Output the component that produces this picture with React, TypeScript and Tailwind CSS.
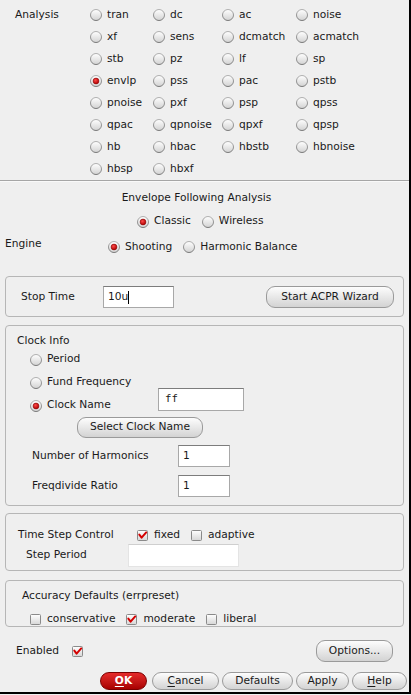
import React from "react";

const FONT = { fontFamily: '"DejaVu Sans", "Liberation Sans", sans-serif' };

function Radio({ checked }: { checked?: boolean }) {
  return (
    <svg width="12" height="12" viewBox="0 0 12 12" className="shrink-0">
      <defs>
        <linearGradient id="rgFill" x1="0" y1="0" x2="0" y2="1">
          <stop offset="0" stopColor="#ffffff" />
          <stop offset="1" stopColor="#d2d2d2" />
        </linearGradient>
        <linearGradient id="rgStroke" x1="0" y1="0" x2="0" y2="1">
          <stop offset="0" stopColor="#b0b0b0" />
          <stop offset="1" stopColor="#7a7a7a" />
        </linearGradient>
        <radialGradient id="rgDot" cx="0.4" cy="0.35" r="0.65">
          <stop offset="0" stopColor="#ff4a4a" />
          <stop offset="1" stopColor="#b00000" />
        </radialGradient>
      </defs>
      <circle cx="6" cy="6" r="5.5" fill="url(#rgFill)" stroke="url(#rgStroke)" />
      {checked && <circle cx="6" cy="6" r="2.9" fill="url(#rgDot)" stroke="#8a0000" strokeWidth="0.6" />}
    </svg>
  );
}

function Check({ checked }: { checked?: boolean }) {
  return (
    <svg width="11" height="11" viewBox="0 0 11 11" className="shrink-0">
      <defs>
        <linearGradient id="cbFill" x1="0" y1="0" x2="0" y2="1">
          <stop offset="0" stopColor="#ffffff" />
          <stop offset="1" stopColor="#d6d6d6" />
        </linearGradient>
      </defs>
      <rect x="0.5" y="0.5" width="10" height="10" rx="1" fill="url(#cbFill)" stroke="#8a8a8a" />
      {checked && (
        <path d="M2.3 4.6 L4.6 7.6 L9.2 2.4" fill="none" stroke="#d40000" strokeWidth="2" strokeLinecap="round" strokeLinejoin="round" />
      )}
    </svg>
  );
}

function RadioItem({ label, checked }: { label: string; checked?: boolean }) {
  return (
    <div className="flex items-center gap-[5px] whitespace-nowrap">
      <Radio checked={checked} />
      <span>{label}</span>
    </div>
  );
}

function CheckItem({ label, checked }: { label: string; checked?: boolean }) {
  return (
    <div className="flex items-center gap-[6px] whitespace-nowrap">
      <Check checked={checked} />
      <span>{label}</span>
    </div>
  );
}

function Btn({ children, className = "" }: { children: React.ReactNode; className?: string }) {
  return (
    <div
      className={
        "flex items-center justify-center rounded-[9px] border border-[#9a9a9a] bg-linear-to-b from-[#fdfdfd] to-[#d3d3d3] whitespace-nowrap " +
        className
      }
    >
      {children}
    </div>
  );
}

function Input({ children, className = "", mono }: { children?: React.ReactNode; className?: string; mono?: boolean }) {
  return (
    <div
      className={
        "flex items-center bg-white border border-[#a8a8a8] border-t-[#7c7c7c] pl-[4px] " + className
      }
      style={mono ? { fontFamily: '"DejaVu Sans Mono", "Liberation Mono", monospace' } : undefined}
    >
      {children}
    </div>
  );
}

const rows: [string, boolean?][][] = [
  [["tran"], ["dc"], ["ac"], ["noise"]],
  [["xf"], ["sens"], ["dcmatch"], ["acmatch"]],
  [["stb"], ["pz"], ["lf"], ["sp"]],
  [["envlp", true], ["pss"], ["pac"], ["pstb"]],
  [["pnoise"], ["pxf"], ["psp"], ["qpss"]],
  [["qpac"], ["qpnoise"], ["qpxf"], ["qpsp"]],
  [["hb"], ["hbac"], ["hbstb"], ["hbnoise"]],
  [["hbsp"], ["hbxf"]],
];

export default function App() {
  return (
    <div className="w-[411px] h-[695px] bg-[#efefef]" style={FONT}>
      <div className="w-[411px] h-[694px] flex flex-col border-r-2 border-b-2 border-black text-[10.67px] text-[#1a1a1a] leading-none">
        {/* Analysis */}
        <div className="flex pl-[15px] pt-[4px]">
          <div className="w-[75px] h-[22px] flex items-center">Analysis</div>
          <div className="grid grid-cols-[63px_69px_74px_auto] auto-rows-[22px]">
            {rows.flat().map(([l, c], i) => (
              <div key={i} className="flex items-center">
                <RadioItem label={l} checked={c} />
              </div>
            ))}
          </div>
        </div>
        <div className="h-px bg-[#a6a6a6]" />
        <div className="h-px bg-[#f9f9f9]" />

        {/* Envelope */}
        <div className="h-[32px] w-[393px] flex items-center justify-center">Envelope Following Analysis</div>
        <div className="h-[15px] flex items-center gap-[11px] pl-[137px]">
          <RadioItem label="Classic" checked />
          <RadioItem label="Wireless" />
        </div>
        <div className="h-[36px] flex items-center pl-[5px]">
          <div className="w-[103px] mb-[6px]">Engine</div>
          <div className="flex items-center gap-[11px]">
            <RadioItem label="Shooting" checked />
            <RadioItem label="Harmonic Balance" />
          </div>
        </div>

        {/* Stop time */}
        <div className="mt-[11px] mx-[5px] h-[41px] rounded-[4px] border border-[#b6b6b6] flex items-center pl-[15px] pr-[9px] pt-px">
          <div className="w-[82px]">Stop Time</div>
          <Input className="w-[71px] h-[22px]">
            <span>10u</span>
            <span className="w-px h-[13px] bg-black" />
          </Input>
          <Btn className="ml-auto w-[128px] h-[22px]">Start ACPR Wizard</Btn>
        </div>

        {/* Clock info */}
        <div className="mt-[8px] mx-[5px] rounded-[4px] border border-[#b6b6b6] flex flex-col pb-[8px]">
          <div className="pt-[8px] h-[22px] pl-[11px] flex items-center">Clock Info</div>
          <div className="flex pl-[24px]">
            <div className="w-[128px] flex flex-col">
              <div className="h-[23px] flex items-center"><RadioItem label="Period" /></div>
              <div className="h-[23px] flex items-center"><RadioItem label="Fund Frequency" /></div>
              <div className="h-[23px] flex items-center"><RadioItem label="Clock Name" checked /></div>
            </div>
            <Input mono className="self-end mb-[6px] w-[86px] h-[23px]">
              <span className="pl-[2px]">ff</span>
            </Input>
          </div>
          <Btn className="ml-[71px] w-[126px] h-[21px]">Select Clock Name</Btn>
          <div className="mt-[7px] flex items-center pl-[26px]">
            <div className="w-[146px]">Number of Harmonics</div>
            <Input className="w-[52px] h-[22px]">1</Input>
          </div>
          <div className="mt-[8px] flex items-center pl-[26px]">
            <div className="w-[146px]">Freqdivide Ratio</div>
            <Input className="w-[52px] h-[22px]">1</Input>
          </div>
        </div>

        {/* Time step */}
        <div className="mt-[7px] mx-[5px] rounded-[4px] border border-[#b6b6b6] flex flex-col pt-[12px] pb-[3px]">
          <div className="h-[18px] flex items-center pl-[12px]">
            <div className="w-[119px]">Time Step Control</div>
            <div className="flex items-center gap-[11px]">
              <CheckItem label="fixed" checked />
              <CheckItem label="adaptive" />
            </div>
          </div>
          <div className="h-[23px] flex items-center pl-[20px]">
            <div className="w-[102px]">Step Period</div>
            <div className="w-[111px] h-[23px] bg-white border border-[#e4e4e4] border-t-[#cfcfcf]" />
          </div>
        </div>

        {/* Accuracy */}
        <div className="mt-[9px] mx-[5px] rounded-[4px] border border-[#b6b6b6] flex flex-col pt-[8px]">
          <div className="h-[14px] flex items-center pl-[16px]">Accuracy Defaults (errpreset)</div>
          <div className="mt-[9px] h-[14px] flex items-center gap-[11px] pl-[24px]">
            <CheckItem label="conservative" />
            <CheckItem label="moderate" checked />
            <CheckItem label="liberal" />
          </div>
        </div>

        {/* Enabled */}
        <div className="mt-[13px] h-[22px] flex items-center pl-[16px] pr-[16px]">
          <span>Enabled</span>
          <div className="ml-[13px]"><Check checked /></div>
          <Btn className="ml-auto w-[77px] h-[22px]">Options...</Btn>
        </div>

        {/* Bottom buttons */}
        <div className="mt-[10px] flex justify-end gap-[3px] pr-[2px]">
          <div className="mr-[2px] w-[47px] h-[18px] flex items-center justify-center rounded-[9px] border border-[#7a0000] bg-linear-to-b from-[#e52a2a] to-[#a80000] text-white font-bold">
            <span className="underline underline-offset-2">O</span>K
          </div>
          <Btn className="w-[67px] h-[18px]"><span className="underline underline-offset-2">C</span>ancel</Btn>
          <Btn className="w-[71px] h-[18px]">Defaults</Btn>
          <Btn className="w-[53px] h-[18px]">Apply</Btn>
          <Btn className="w-[55px] h-[18px]"><span className="underline underline-offset-2">H</span>elp</Btn>
        </div>
      </div>
    </div>
  );
}
